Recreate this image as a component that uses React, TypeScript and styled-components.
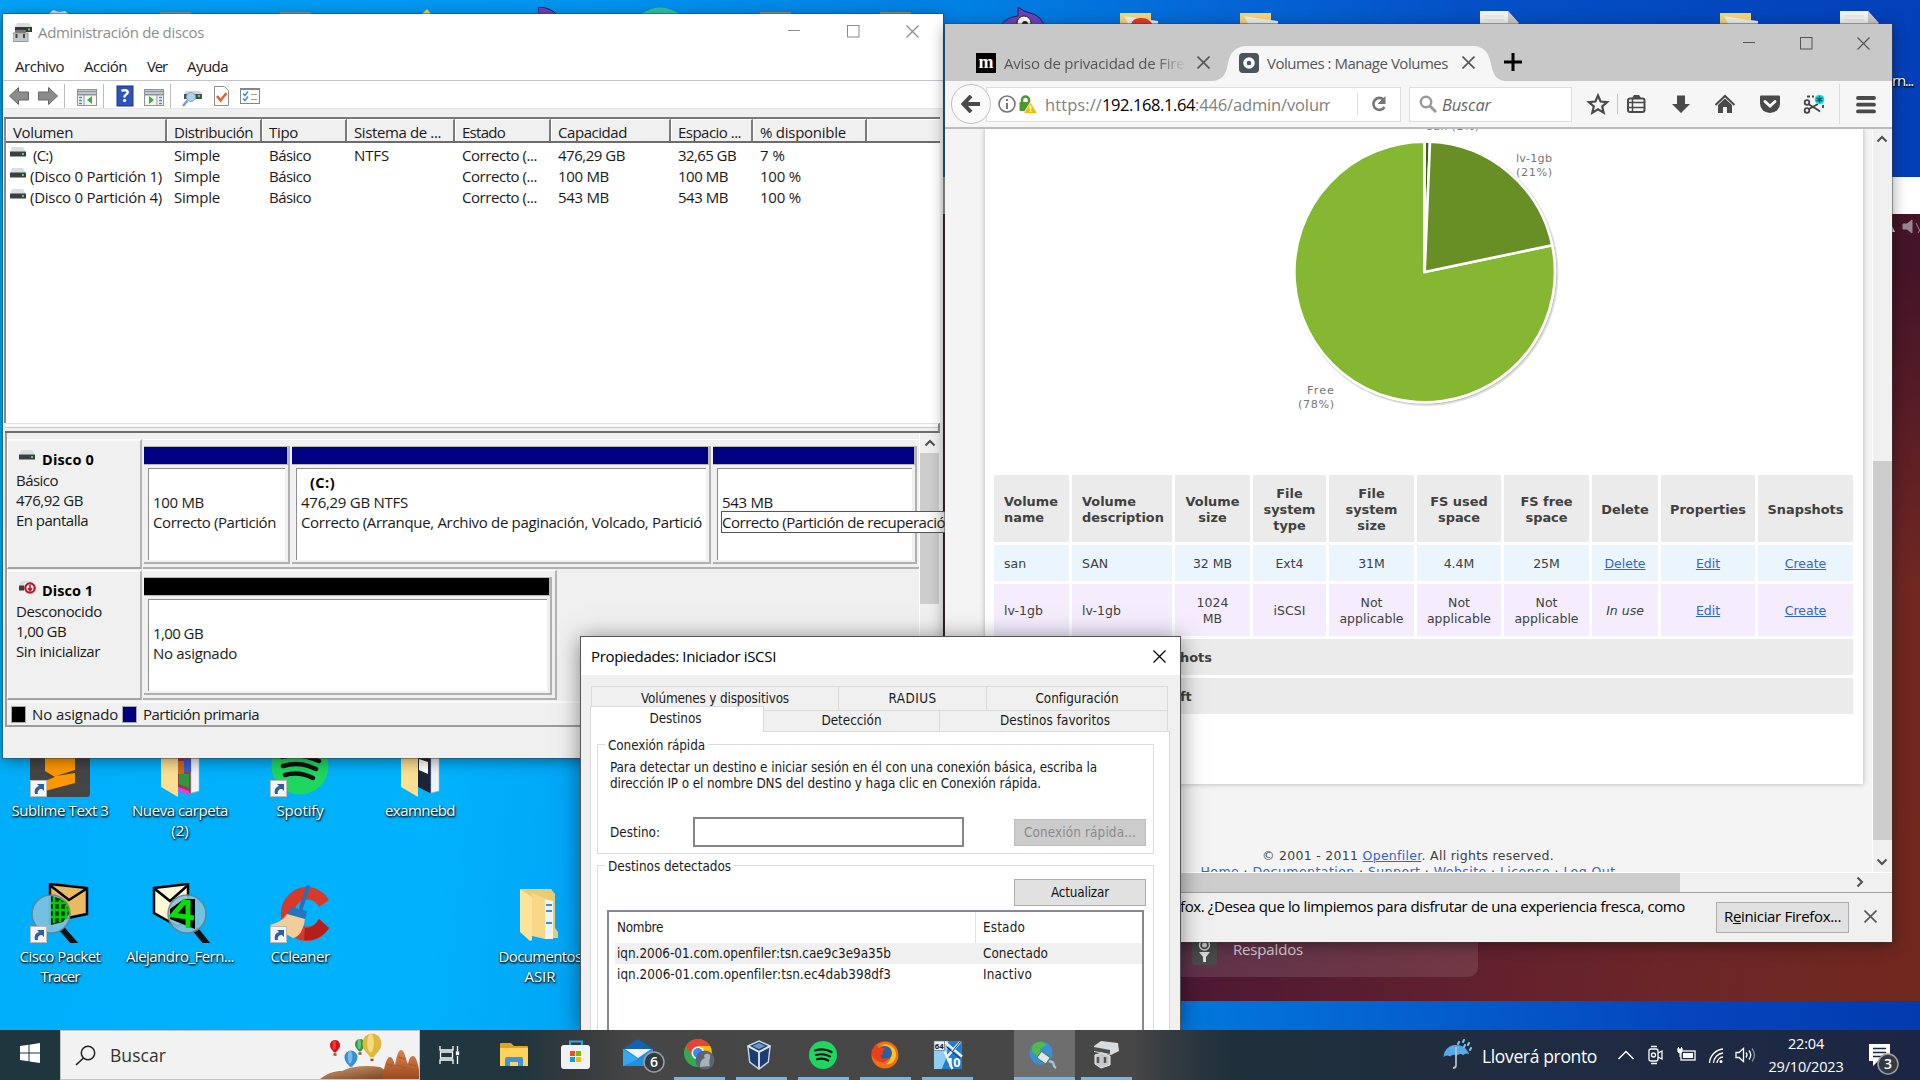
import React, { useLayoutEffect, useRef } from "react";
import styled, { createGlobalStyle, css } from "styled-components";

const ui = `"Open Sans", "Noto Sans", sans-serif`;
const verdana = `"DejaVu Sans", sans-serif`;
const tahoma = `"DejaVu Sans Condensed", "DejaVu Sans", sans-serif`;

const Global = createGlobalStyle`
  * { box-sizing: border-box; }
  body { margin: 0; overflow: hidden; font-family: ${ui}; font-size: 15px; color: #1a1a1a; }
`;

/* ---------- text fitted to a given width ---------- */
const FitSpan = styled.span`
  display: inline-block;
  white-space: pre;
`;
function Fit({ w, children }: { w: number; children: React.ReactNode }) {
  const ref = useRef<HTMLSpanElement>(null);
  useLayoutEffect(() => {
    const el = ref.current;
    if (!el) return;
    el.style.letterSpacing = "0px";
    const n = Array.from(el.textContent || "").length;
    el.style.letterSpacing = `${(w - el.getBoundingClientRect().width) / n}px`;
  }, [w]);
  return <FitSpan ref={ref}>{children}</FitSpan>;
}

/* ---------- desktop ---------- */
const Desktop = styled.main`
  position: relative;
  width: 1920px;
  height: 1080px;
  overflow: hidden;
  background: linear-gradient(97deg, #00aefa 0%, #00b2fd 26%, #0094ee 46%, #0080e2 60%, #0462d0 74%, #0545be 88%, #033aae 100%);
`;
const DesktopTop = styled.div`
  position: absolute;
  inset: 0 0 auto 0;
  height: 180px;
  background: linear-gradient(95deg, #00a2f6 0%, #0094ef 30%, #0080e3 50%, #0468d6 62%, #0450c6 76%, #033fb8 100%);
`;
const Peek = styled.svg<{ $x: number; $y: number }>`
  position: absolute;
  left: ${(p) => p.$x}px;
  top: ${(p) => p.$y}px;
`;
const DeskIcon = styled.div<{ $x: number; $y: number }>`
  position: absolute;
  left: ${(p) => p.$x}px;
  top: ${(p) => p.$y}px;
  width: 120px;
  display: flex;
  flex-direction: column;
  align-items: center;
  color: #fff;
  line-height: 20px;
  text-shadow: 0 1px 2px #000, 1px 1px 2px rgba(0, 0, 0, 0.8);
  svg { margin-bottom: 3px; }
`;
const EdgeLabel = styled.div`
  position: absolute;
  left: 1892px;
  top: 70px;
  line-height: 20px;
  color: #fff;
  text-shadow: 0 1px 2px #000, 1px 1px 2px #000;
`;

const Shortcut = () => (
  <g>
    <rect x="0.5" y="43.5" width="16" height="16" fill="#f4f4f4" stroke="#b9b9b9" />
    <path d="M5 57c-1-5 1-7 4-8l-2-2h7v7l-2-2c-3 0-5 2-4 5z" fill="#2f5f9f" />
  </g>
);
const Folder = ({ tone = "#7a2c2c" }: { tone?: string }) => (
  <g>
    <path d="M11 2h29v7h4v46h-4V12H11z" fill="#edc964" />
    <path d="M28 8h14l6 4v42l-8 2-12-6z" fill={tone} />
    <path d="M41 10l8 2v42l-8 2z" fill="#eef4fa" stroke="#a9bdd3" strokeWidth=".6" />
    <path d="M11 2l17 10v48L11 50z" fill="#fbdf92" />
  </g>
);

/* ---------- virtual machine behind ---------- */
const Vm = styled.section`
  position: absolute;
  left: 943px;
  top: 177px;
  width: 977px;
  height: 824px;
  padding-top: 37px;
  background: #fff;
  display: flex;
`;
const VmScreen = styled.div`
  position: relative;
  flex: 1;
  background: linear-gradient(165deg, #42122a 0%, #451428 30%, rgba(70, 20, 40, 0) 60%),
    linear-gradient(100deg, #4a1634 0%, #4b1834 32%, #5e1f2f 55%, #6d2628 78%, #70281d 100%);
  display: flex;
  flex-direction: column;
  justify-content: flex-end;
`;
const VmPane = styled.div`
  width: 535px;
  height: 120px;
  margin-bottom: 24px;
  border-radius: 0 0 10px 10px;
  background: rgba(255, 255, 255, 0.11);
  display: flex;
  align-items: flex-end;
  gap: 16px;
  padding: 0 0 12px 249px;
  color: #d8ced3;
  line-height: 31px;
`;
const VmTray = styled.svg`
  position: absolute;
  right: 0;
  top: 3px;
`;

/* ---------- windows ---------- */
const Window = styled.section<{ $x: number; $y: number; $w: number; $h: number }>`
  position: absolute;
  left: ${(p) => p.$x}px;
  top: ${(p) => p.$y}px;
  width: ${(p) => p.$w}px;
  height: ${(p) => p.$h}px;
  display: flex;
  flex-direction: column;
  background: #f0f0f0;
  box-shadow: 0 0 0 1px rgba(60, 60, 60, 0.45), 0 3px 14px rgba(0, 0, 0, 0.42);
`;
const Grow = styled.div`
  flex: 1;
`;

const DiskTitle = styled.header`
  height: 37px;
  background: #fff;
  display: flex;
  align-items: center;
  padding: 0 24px 2px 10px;
  color: #8c8c8c;
  > svg:first-child { margin: 2px 6px 0 0; }
`;
const CaptionButtons = styled.div<{ $gap: number }>`
  display: flex;
  gap: ${(p) => p.$gap}px;
`;
const MenuBar = styled.nav`
  height: 30px;
  background: #fff;
  border-bottom: 1px solid #c4c4cc;
  display: flex;
  align-items: center;
  gap: 20px;
  padding: 0 0 0 12px;
`;
const Tools = styled.div`
  height: 28px;
  background: #fff;
  display: flex;
  align-items: center;
  padding: 2px 0 0 5px;
  border-bottom: 1px solid #e6e6e6;
`;
const VolumeList = styled.div`
  height: 306px;
  margin: 8px 3px 0 1px;
  background: #fff;
  border-top: 2px solid #787878;
  border-left: 2px solid #8a8a8a;
`;
const volumeCols = css`
  display: grid;
  grid-template-columns: 161px 95px 85px 108px 96px 120px 82px 114px 1fr;
`;
const VolumeHeader = styled.div`
  ${volumeCols}
  height: 24px;
  background: #f0f0f0;
  border-bottom: 2px solid #6c6c6c;
`;
const HeaderCell = styled.div`
  border-right: 2px solid #7b7b7b;
  border-left: 1px solid #fff;
  border-top: 1px solid #fff;
  padding-left: 6px;
  line-height: 24px;
  white-space: nowrap;
  overflow: hidden;
  &:last-child { border-right: 0; }
`;
const VolumeRow = styled.div`
  ${volumeCols}
  height: 21px;
  position: relative;
  top: 2px;
  line-height: 21px;
  > div { padding-left: 7px; white-space: nowrap; }
  > div:first-child { padding-left: 3px; display: flex; gap: 3px; }
  svg { margin-top: 1px; }
`;
const SplitBar = styled.div`
  height: 10px;
  margin: 0 3px 0 2px;
  background: #f0f0f0;
  border-top: 1px solid #e2e2e2;
  border-right: 2px solid #8c8c8c;
  border-bottom: 2px solid #6e6e6e;
  box-shadow: inset 0 3px 0 #fafafa, inset 0 4px 0 #c9c9c9;
`;
const GraphArea = styled.div`
  height: 268px;
  margin: 0 3px 0 2px;
  border-left: 2px solid #9c9c9c;
  display: flex;
`;
const DiskRows = styled.div`
  width: 912px;
  padding-top: 6px;
`;
const DiskRow = styled.div`
  height: 131px;
  display: flex;
`;
const DiskLabel = styled.div`
  width: 135px;
  height: 130px;
  padding: 9px 0 0 8px;
  border-top: 2px solid #fbfbfb;
  border-left: 1px solid #fff;
  border-bottom: 2px solid #a3a3a3;
  border-right: 2px solid #b4b4b4;
  line-height: 20px;
`;
const DiskName = styled.div`
  display: flex;
  gap: 6px;
  font-weight: 700;
  font-size: 14.5px;
  color: #000;
  height: 20px;
  svg { margin: -1px 0 0 2px; }
`;
const Strip = styled.div<{ $w?: number }>`
  ${(p) => (p.$w ? `width: ${p.$w}px;` : "flex: 1;")}
  height: 130px;
  margin-left: 1px;
  padding: 6px 0 0 1px;
  border-top: 1px solid #fdfdfd;
  border-bottom: 2px solid #b0b0b0;
  ${(p) => p.$w && "border-right: 2px solid #b4b4b4;"}
  display: flex;
  gap: 2px;
`;
const Partition = styled.div<{ $w: number }>`
  width: ${(p) => p.$w}px;
  height: 118px;
  border-right: 2px solid #b0b0b0;
  border-bottom: 2px solid #b0b0b0;
`;
const PartitionBar = styled.div<{ $c: string }>`
  height: 19px;
  background: ${(p) => p.$c};
  border: 1px solid #b9b9b0;
  border-left: 0;
`;
const PartitionBox = styled.div`
  height: 92px;
  margin: 3px 3px 0 4px;
  padding: 3px 0 0 4px;
  background: #fff;
  border-top: 1px solid #8f8f8f;
  border-left: 1px solid #8f8f8f;
  line-height: 20px;
  white-space: nowrap;
  overflow: hidden;
  > div { height: 20px; }
  b { font-size: 14.5px; padding-left: 9px; color: #000; }
`;
const DiskScroll = styled.div`
  width: 20px;
  display: flex;
  flex-direction: column;
  align-items: center;
  border-left: 1px solid #fff;
  > svg { height: 20px; }
  > div { width: 19px; height: 151px; background: #cdcdcd; }
`;
const Legend = styled.div`
  height: 26px;
  margin: 0 3px 0 2px;
  border: solid #9c9c9c;
  border-width: 0 0 2px 2px;
  box-shadow: inset 0 2px 0 #fafafa;
  display: flex;
  align-items: center;
  padding: 2px 0 0 4px;
`;
const Swatch = styled.i<{ $c: string }>`
  width: 15px;
  height: 17px;
  background: ${(p) => p.$c};
  border: 1px solid #a9a9a9;
  margin-right: 6px;
`;
const Tip = styled.div`
  position: absolute;
  left: 721px;
  top: 511px;
  width: 224px;
  height: 22px;
  border: 1px solid #555;
  border-right: 0;
  background: linear-gradient(90deg, #fff 88%, #f0f0f0);
  line-height: 20px;
  white-space: nowrap;
  overflow: hidden;
`;

/* ---------- browser ---------- */
const TabStrip = styled.header`
  position: relative;
  height: 57px;
  background: #c8c8c8;
  display: flex;
  align-items: flex-end;
  color: #555;
`;
const Tab = styled.div<{ $w: number; $pad: number }>`
  position: relative;
  width: ${(p) => p.$w}px;
  height: 35px;
  padding: 0 0 2px ${(p) => p.$pad}px;
  display: flex;
  align-items: center;
  > svg { flex: none; }
`;
const TabShape = styled.svg`
  position: absolute;
  left: 0;
  top: 0;
`;
const TabText = styled.div<{ $w: number; $fade?: boolean }>`
  position: relative;
  width: ${(p) => p.$w}px;
  margin: 0 8px;
  white-space: nowrap;
  overflow: hidden;
  ${(p) => p.$fade && "mask-image: linear-gradient(90deg, #000 84%, transparent 100%);"}
`;
const Raised = styled.svg`
  position: relative;
`;
const BrowserCaption = styled(CaptionButtons)`
  align-self: flex-start;
  padding: 13px 22px 0 0;
`;
const NavBar = styled.div`
  height: 48px;
  background: #f6f6f6;
  border-bottom: 2px solid #bcbcbc;
  display: flex;
  align-items: center;
  padding-left: 6px;
`;
const BackButton = styled.div`
  width: 40px;
  height: 40px;
  border: 1px solid #c2c2c2;
  border-radius: 50%;
  background: #fafafa;
  display: grid;
  place-items: center;
  z-index: 1;
`;
const UrlBox = styled.div`
  width: 415px;
  height: 35px;
  margin-left: -5px;
  background: #fff;
  border: 1px solid #dedede;
  display: flex;
  align-items: center;
  padding-left: 10px;
  font-size: 16.5px;
  color: #808080;
  b { font-weight: 400; color: #000; }
`;
const UrlText = styled.div`
  width: 285px;
  margin-left: 8px;
  white-space: nowrap;
  overflow: hidden;
`;
const SearchBox = styled.div`
  width: 163px;
  height: 35px;
  margin: 0 14px 0 8px;
  background: #fff;
  border: 1px solid #dedede;
  display: flex;
  align-items: center;
  gap: 5px;
  padding-left: 9px;
  font-size: 16.5px;
  font-style: italic;
  color: #666;
`;
const VLine = styled.i<{ $h: number; $m: string; $c?: string }>`
  width: 1px;
  height: ${(p) => p.$h}px;
  margin: ${(p) => p.$m};
  background: ${(p) => p.$c || "#c6c6c6"};
`;
const Viewport = styled.div`
  height: 743px;
  display: flex;
  overflow: hidden;
`;
const Page = styled.div`
  flex: 1;
  background: #f4f4f4;
  overflow: hidden;
  padding-left: 40px;
  font-family: ${verdana};
  font-size: 12.5px;
  color: #404040;
`;
const Sheet = styled.div`
  width: 878px;
  height: 655px;
  background: #fff;
  box-shadow: 0 0 5px rgba(0, 0, 0, 0.28);
  padding: 0 6px;
`;
const VolTable = styled.table`
  table-layout: fixed;
  width: 865px;
  border-collapse: separate;
  border-spacing: 3px;
  line-height: 16px;
  th, td { padding: 2px 7px 0; background: #ebebeb; text-align: center; }
  th { height: 67px; font-size: 12.9px; }
  th:nth-child(-n + 2), td:nth-child(-n + 2) { text-align: left; padding-left: 10px; padding-right: 0; }
  a { color: #36c; text-decoration: underline; }
`;
const Tr = styled.tr<{ $c?: string; $h: number }>`
  td { background: ${(p) => p.$c || "#ebebeb"}; height: ${(p) => p.$h}px; }
  td[colspan] { padding-left: 186px; font-weight: 700; font-size: 12.9px; }
`;
const PageFooter = styled.footer`
  text-align: center;
  padding: 64px 0 0 0;
  width: 846px;
  line-height: 16px;
  a { color: #36c; text-decoration: underline; }
`;
const VScroll = styled.div`
  width: 20px;
  background: #f0f0f0;
  border-left: 1px solid #fff;
  display: flex;
  flex-direction: column;
  align-items: center;
  padding: 4px 1px 0 0;
`;
const VThumb = styled.div`
  width: 19px;
  height: 379px;
  margin: 316px 0 16px;
  background: #cdcdcd;
`;
const HScroll = styled.div`
  height: 20px;
  background: #f0f0f0;
  border-top: 1px solid #fff;
  display: flex;
  align-items: center;
  > div { width: 735px; height: 19px; background: #cdcdcd; margin-right: 174px; }
  > svg { margin-bottom: 2px; }
`;
const Notice = styled.div`
  flex: 1;
  border-top: 1px solid #a0a0a0;
  background: #f0f0f0;
  display: flex;
  padding-left: 235px;
  color: #000;
  > div:first-child { padding-top: 3px; width: 505px; white-space: nowrap; }
  > svg { margin: 17px 0 0 15px; }
`;
const NoticeButton = styled.div`
  width: 133px;
  height: 31px;
  margin: 9px 0 0 31px;
  background: #e1e1e1;
  border: 1px solid #adadad;
  line-height: 27px;
  text-align: center;
`;

/* ---------- iSCSI dialog ---------- */
const Dialog = styled(Window)`
  font-family: ${tahoma};
  font-size: 13.4px;
  box-shadow: 0 0 0 1px #555, 0 2px 22px rgba(0, 0, 0, 0.5);
`;
const DialogTitle = styled.header`
  height: 38px;
  flex: none;
  background: #fff;
  display: flex;
  align-items: center;
  justify-content: space-between;
  padding: 0 14px 0 10px;
  font-family: ${ui};
  font-size: 15px;
  color: #000;
`;
const TabsTop = styled.div`
  flex: none;
  display: grid;
  grid-template-columns: 247px 148px 182px;
  height: 23px;
  margin: 11px 0 0 10px;
  > div {
    border: 1px solid #dadada;
    border-right: 0;
    text-align: center;
    line-height: 23px;
  }
  > div:last-child { border-right: 1px solid #dadada; }
`;
const TabsBottom = styled.div`
  flex: none;
  display: grid;
  grid-template-columns: 174px 176px 228px;
  height: 22px;
  margin-left: 9px;
  > div {
    border-right: 1px solid #dadada;
    text-align: center;
    line-height: 23px;
  }
  > div:last-child { padding-left: 3px; }
  > div:first-child {
    height: 26px;
    margin-top: -3px;
    padding-right: 3px;
    background: #fff;
    border: 1px solid #dadada;
    border-bottom: 0;
    line-height: 24px;
    z-index: 1;
  }
`;
const DialogPage = styled.div`
  flex: 1;
  min-height: 0;
  overflow: hidden;
  width: 580px;
  margin-left: 9px;
  background: #fff;
  border: 1px solid #dadada;
  border-bottom: 0;
  padding: 12px 15px 0 6px;
`;
const Group = styled.div<{ $h: number }>`
  height: ${(p) => p.$h}px;
  margin-bottom: 11px;
  border: 1px solid #dcdcdc;
  padding: 0 7px 0 12px;
  display: flex;
  flex-direction: column;
`;
const GroupName = styled.div`
  align-self: flex-start;
  height: 16px;
  margin: -8px 0 0 -5px;
  padding: 0 3px;
  background: #fff;
  line-height: 17px;
`;
const Para = styled.div`
  margin-top: 7px;
  line-height: 16px;
  height: 32px;
`;
const FieldRow = styled.div`
  display: flex;
  align-items: center;
  margin-top: 25px;
`;
const ButtonRow = styled.div`
  display: flex;
  justify-content: flex-end;
  margin-top: 5px;
`;
const Input = styled.div`
  width: 271px;
  height: 30px;
  margin: 0 50px 0 33px;
  border: 2px solid #868686;
`;
const Button = styled.div<{ $off?: boolean }>`
  width: 132px;
  height: 27px;
  border: ${(p) => (p.$off ? "1px solid #bfbfbf" : "1px solid #adadad")};
  background: ${(p) => (p.$off ? "#ccc" : "#e1e1e1")};
  color: ${(p) => (p.$off ? "#8a8a8a" : "#111")};
  line-height: 26px;
  text-align: center;
`;
const Targets = styled.div`
  flex: 1;
  width: 537px;
  margin: 4px 0 0 -3px;
  border: 2px solid #868a90;
  border-bottom: 0;
`;
const TargetRow = styled.div<{ $h: number; $on?: boolean }>`
  display: grid;
  grid-template-columns: 361px 1fr;
  height: ${(p) => p.$h}px;
  line-height: ${(p) => p.$h}px;
  margin-left: 6px;
  background: ${(p) => (p.$on ? "#f0f0f0" : "#fff")};
  > div { padding-left: 2px; }
  > div:last-child { padding-left: 7px; }
`;
const TargetHead = styled(TargetRow)`
  > div:first-child { border-right: 1px solid #e0e0e0; }
`;

/* ---------- taskbar ---------- */
const Taskbar = styled.footer`
  position: absolute;
  left: 0;
  top: 1030px;
  width: 1920px;
  height: 50px;
  display: flex;
  align-items: center;
  color: #fff;
  background: linear-gradient(90deg, #20363e 0%, #21363e 27%, #353a3d 30%, #464646 33%, #474747 59%, #333b42 61%, #1f303b 64%, #1f2c40 80%, #1c2644 100%);
`;
const Start = styled.div`
  width: 60px;
  padding-left: 20px;
`;
const TaskSearch = styled.div`
  width: 360px;
  height: 50px;
  background: #f2f2f2;
  border: 1px solid #c4c4c4;
  display: flex;
  align-items: center;
  padding-left: 14px;
  color: #333;
  font-size: 17.5px;
  > span { margin-left: 14px; }
  > svg:last-child { margin-left: auto; }
`;
const TaskItem = styled.div<{ $w: number; $run?: boolean; $on?: boolean; $nudge?: number }>`
  width: ${(p) => p.$w}px;
  height: 50px;
  display: flex;
  align-items: center;
  justify-content: center;
  flex: none;
  background: ${(p) => (p.$on ? "#6e6e6e" : "transparent")};
  border-bottom: 3px solid ${(p) => (p.$run ? "#76b5ea" : "transparent")};
  padding: 3px ${(p) => p.$nudge || 0}px 0 0;
`;
const TaskGroup = styled.div<{ $gap: number; $l: number }>`
  display: flex;
  gap: ${(p) => p.$gap}px;
  margin-left: ${(p) => p.$l}px;
`;
const Clock = styled.div`
  width: 80px;
  display: flex;
  flex-direction: column;
  align-items: center;
  line-height: 23px;
  font-size: 14.5px;
`;
const Weather = styled.div`
  display: flex;
  align-items: center;
  gap: 8px;
  font-size: 17.5px;
  margin: 0 20px 0 auto;
  span { padding-top: 2px; }
`;
const Tray = styled.div`
  display: flex;
  align-items: center;
  gap: 11px;
  margin-right: 9px;
`;

/* ---------- small drawings ---------- */
const Cross = ({ s = 13, c = "#555", w = 1.2 }) => (
  <Raised width={s} height={s} viewBox={`0 0 ${s} ${s}`}>
    <path d={`M.5.5l${s - 1} ${s - 1}M${s - 0.5}.5l-${s - 1} ${s - 1}`} stroke={c} strokeWidth={w} fill="none" />
  </Raised>
);
const MinMax = ({ c }: { c: string }) => (
  <>
    <svg width="13" height="13"><path d="M0 5.500h12" stroke={c} /></svg>
    <svg width="13" height="13"><rect x=".5" y=".5" width="11.500" height="11.500" fill="none" stroke={c} /></svg>
  </>
);
const Chevron = ({ r = 0 }) => (
  <svg width="12" height="12" viewBox="0 0 12 12">
    <path d="M1.500 8.500L6 4l4.500 4.500" transform={`rotate(${r} 6 6)`} fill="none" stroke="#505050" strokeWidth="2" />
  </svg>
);
const Drive = ({ off = false }) => (
  <svg width="18" height="14" viewBox="0 0 18 14">
    <path d="M3 1h11l3 5H1z" fill="#dcdfe2" />
    <rect x="1" y="5.500" width="16" height="5" rx=".5" fill="#3b3f42" />
    <rect x="13" y="7" width="2" height="2" fill="#3fe05a" />
    {off && (
      <g>
        <path d="M6 3h12v11H6z" fill="#f0f0f0" />
        <circle cx="12" cy="8" r="5.800" fill="#c01028" />
        <circle cx="12" cy="8" r="3.600" fill="#fff" />
        <path d="M12 5v5.500M9.800 8.300L12 10.600l2.200-2.300" stroke="#c01028" strokeWidth="1.600" fill="none" />
      </g>
    )}
  </svg>
);
const ToolIcons = () => (
  <svg width="262" height="26" viewBox="0 0 262 26">
    <g stroke="#666" strokeWidth="1" fill="#8c8c8c">
      <path d="M1.500 13l9-8.500V9h10v8h-10v4.500z" />
      <path d="M49.500 13l-9-8.500V9h-10v8h10v4.500z" />
    </g>
    <path d="M56.500 1v24M95.500 1v24M162.500 1v24" stroke="#bdbdbd" />
    {[69, 136].map((x, i) => (
      <g key={x}>
        <rect x={x + 0.5} y="6.500" width="19" height="16" fill="#f6f6f6" stroke="#8d949b" />
        <path d={`M${x} 8.500h20M${x} 11.500h20`} stroke="#8d949b" strokeWidth="2" />
        <path d={i ? `M${x + 13} 12v10` : `M${x + 7} 12v10`} stroke="#8d949b" />
        <path d={i ? `M${x + 15} 14.500h3m-3 3h3m-3 3h3` : `M${x + 2} 14.500h3m-3 3h3m-3 3h3`} stroke="#4d88c4" strokeWidth="1.500" />
        <path d={i ? `M${x + 5} 13v8l5-4z` : `M${x + 15} 13v8l-5-4z`} fill="#3fae3a" />
      </g>
    ))}
    <rect x="109" y="3" width="16" height="20" fill="#2f52b8" stroke="#1d3584" />
    <text x="117" y="19" fontSize="17" fontWeight="700" fill="#fff" textAnchor="middle" fontFamily="Open Sans">?</text>
    <path d="M178 8h14l2 3h-18z" fill="#d4d7da" />
    <rect x="176" y="11" width="18" height="5" fill="#4b5053" />
    <rect x="190" y="12" width="2" height="2" fill="#3fe05a" />
    <circle cx="183" cy="14" r="4.500" fill="#a8d2ef" stroke="#8aa4b8" />
    <path d="M179.500 17.500L175 23" stroke="#7f9cb4" strokeWidth="2.500" />
    <path d="M206.500 3.500h10l4 4v15h-14z" fill="#fff" stroke="#909090" />
    <path d="M209 13l3.500 4.500 6-7.500" fill="none" stroke="#e8602c" strokeWidth="2.500" />
    <rect x="232.500" y="5.500" width="19" height="15" fill="#fff" stroke="#7f8890" />
    <path d="M232 6h20" stroke="#7f8890" strokeWidth="2" />
    <path d="M235 10.500l2 2 3-4M235 15.500l2 2 3-4" stroke="#3f8fdc" fill="none" strokeWidth="1.500" />
    <path d="M243 11.500h6M243 16.500h6" stroke="#a0a0a0" />
  </svg>
);

const volumes = [
  [<Fit w={22} key="v"> (C:)</Fit>, "NTFS", "476,29 GB", "32,65 GB", "7 %", 67, 58],
  [<Fit w={132} key="v">(Disco 0 Partición 1)</Fit>, "", "100 MB", "100 MB", "100 %", 51, 50],
  [<Fit w={132} key="v">(Disco 0 Partición 4)</Fit>, "", "543 MB", "543 MB", "100 %", 51, 50],
] as const;

function DiskManager() {
  return (
    <Window $x={3} $y={14} $w={940} $h={744}>
      <DiskTitle>
        <svg width="19" height="19" viewBox="0 0 19 19">
          <path d="M4 0h12l3 4H2z" fill="#d9dcdf" />
          <rect x="2" y="4" width="17" height="5" fill="#34383b" />
          <rect x="15" y="5.500" width="2" height="2" fill="#3fe05a" />
          <rect x="2" y="7" width="11" height="4" fill="#777" />
          <rect x="0" y="10" width="15" height="8.500" fill="#c3c7ca" stroke="#888" strokeWidth=".8" />
          <path d="M3.500 11v4M11 11v4" stroke="#444" strokeWidth="2" />
        </svg>
        <Fit w={166}>Administración de discos</Fit>
        <Grow />
        <CaptionButtons $gap={46}>
          <MinMax c="#8a8a8a" />
          <Cross c="#8a8a8a" />
        </CaptionButtons>
      </DiskTitle>
      <MenuBar>
        <Fit w={49}>Archivo</Fit>
        <Fit w={43}>Acción</Fit>
        <Fit w={20}>Ver</Fit>
        <Fit w={41}>Ayuda</Fit>
      </MenuBar>
      <Tools><ToolIcons /></Tools>
      <VolumeList>
        <VolumeHeader>
          <HeaderCell><Fit w={60}>Volumen</Fit></HeaderCell>
          <HeaderCell><Fit w={79}>Distribución</Fit></HeaderCell>
          <HeaderCell><Fit w={29}>Tipo</Fit></HeaderCell>
          <HeaderCell><Fit w={87}>Sistema de ...</Fit></HeaderCell>
          <HeaderCell><Fit w={43}>Estado</Fit></HeaderCell>
          <HeaderCell><Fit w={69}>Capacidad</Fit></HeaderCell>
          <HeaderCell><Fit w={63}>Espacio ...</Fit></HeaderCell>
          <HeaderCell><Fit w={86}>% disponible</Fit></HeaderCell>
          <HeaderCell />
        </VolumeHeader>
        {volumes.map((v, i) => (
          <VolumeRow key={i}>
            <div><Drive />{v[0]}</div>
            <div><Fit w={46}>Simple</Fit></div>
            <div><Fit w={42}>Básico</Fit></div>
            <div>{v[1] && <Fit w={35}>{v[1]}</Fit>}</div>
            <div><Fit w={75}>Correcto (...</Fit></div>
            <div><Fit w={v[5]}>{v[2]}</Fit></div>
            <div><Fit w={v[6]}>{v[3]}</Fit></div>
            <div><Fit w={i ? 41 : 25}>{v[4]}</Fit></div>
            <div />
          </VolumeRow>
        ))}
      </VolumeList>
      <SplitBar />
      <GraphArea>
        <DiskRows>
          <DiskRow>
            <DiskLabel>
              <DiskName><Drive /><Fit w={52}>Disco 0</Fit></DiskName>
              <div><Fit w={42}>Básico</Fit></div>
              <div><Fit w={67}>476,92 GB</Fit></div>
              <div><Fit w={72}>En pantalla</Fit></div>
            </DiskLabel>
            <Strip>
              <Partition $w={146}>
                <PartitionBar $c="#000080" />
                <PartitionBox>
                  <div />
                  <div><Fit w={51}>100 MB</Fit></div>
                  <div><Fit w={123}>Correcto (Partición</Fit></div>
                </PartitionBox>
              </Partition>
              <Partition $w={419}>
                <PartitionBar $c="#000080" />
                <PartitionBox>
                  <div><b><Fit w={25}>(C:)</Fit></b></div>
                  <div><Fit w={107}>476,29 GB NTFS</Fit></div>
                  <div><Fit w={401}>Correcto (Arranque, Archivo de paginación, Volcado, Partició</Fit></div>
                </PartitionBox>
              </Partition>
              <Partition $w={204}>
                <PartitionBar $c="#000080" />
                <PartitionBox>
                  <div />
                  <div><Fit w={51}>543 MB</Fit></div>
                </PartitionBox>
              </Partition>
            </Strip>
          </DiskRow>
          <DiskRow>
            <DiskLabel>
              <DiskName><Drive off /><Fit w={51}>Disco 1</Fit></DiskName>
              <div><Fit w={86}>Desconocido</Fit></div>
              <div><Fit w={50}>1,00 GB</Fit></div>
              <div><Fit w={84}>Sin inicializar</Fit></div>
            </DiskLabel>
            <Strip $w={414}>
              <Partition $w={408}>
                <PartitionBar $c="#000" />
                <PartitionBox>
                  <div />
                  <div><Fit w={50}>1,00 GB</Fit></div>
                  <div><Fit w={84}>No asignado</Fit></div>
                </PartitionBox>
              </Partition>
            </Strip>
          </DiskRow>
        </DiskRows>
        <DiskScroll><Chevron /><div /></DiskScroll>
      </GraphArea>
      <Legend>
        <Swatch $c="#000" /><Fit w={90}>No asignado </Fit>
        <Swatch $c="#000080" /><Fit w={116}>Partición primaria</Fit>
      </Legend>
    </Window>
  );
}

const NavIcons = () => (
  <svg width="290" height="40" viewBox="1586 84 290 40">
    <path d="M1598 95.500l2.600 6 6.500.6-4.900 4.300 1.500 6.400-5.700-3.400-5.700 3.400 1.500-6.400-4.900-4.300 6.500-.6z" fill="none" stroke="#4a4a4a" strokeWidth="2.200" />
    <path d="M1617.500 94v20" stroke="#c6c6c6" />
    <rect x="1628" y="98.500" width="16.500" height="13.500" rx="2" fill="none" stroke="#4a4a4a" strokeWidth="2" />
    <path d="M1632 98l2-3h5l2 3z" fill="#4a4a4a" />
    <path d="M1632.500 98v14M1628 102.500h16M1628 107.500h16" stroke="#4a4a4a" strokeWidth="1.500" />
    <path d="M1677 95.500h8v8.500h5l-9 9-9-9h5z" fill="#4a4a4a" />
    <path d="M1715.500 105l9.500-9 9.500 9" fill="none" stroke="#4a4a4a" strokeWidth="2" />
    <path d="M1718 105l7-6.500 7 6.500v8h-5v-6h-4v6h-5z" fill="#4a4a4a" />
    <path d="M1760 96.500q0-1 1-1h18q1 0 1 1v7a10 9.500 0 0 1-20 0z" fill="#4a4a4a" />
    <path d="M1765 101.500l5 4.500 5-4.500" fill="none" stroke="#fff" strokeWidth="2.800" strokeLinecap="round" />
    <g fill="none" stroke="#444" strokeWidth="1.800">
      <circle cx="1807" cy="102.500" r="2.300" /><circle cx="1807" cy="110.500" r="2.300" />
      <path d="M1809 104.500l9 5.500M1809 109l9-5" />
      <path d="M1807 96.500h7M1823 105v4M1820 111.500l-3-2" strokeDasharray="3 2" />
    </g>
    <circle cx="1819.500" cy="99.500" r="4.800" fill="#00e5f5" />
    <path d="M1819.500 96v7M1816.500 97.800l6 3.400M1822.500 97.800l-6 3.400" stroke="#055" strokeWidth="1.400" />
    <path d="M1839.500 84v40" stroke="#dcdcdc" />
    <path d="M1858 98h16M1858 104.700h16M1858 111.400h16" stroke="#4a4a4a" strokeWidth="3.800" strokeLinecap="round" />
  </svg>
);

const Pie = () => (
  <svg width="866" height="343" viewBox="991 129 866 343" display="block">
    <g fontFamily="DejaVu Sans" fontSize="11.200" fill="#777">
      <text x="1427" y="130" textLength="52">san (1%)</text>
      <text x="1516" y="162" textLength="36">lv-1gb</text>
      <text x="1516" y="176" textLength="36">(21%)</text>
      <text x="1307" y="394" textLength="27">Free</text>
      <text x="1298" y="408" textLength="36">(78%)</text>
    </g>
    <circle cx="1426" cy="273.500" r="132.500" fill="#bbb" opacity=".45" />
    <circle cx="1425.500" cy="273" r="131.500" fill="#aaa" opacity=".6" />
    <circle cx="1424.700" cy="272" r="131.500" fill="#fff" />
    <g stroke="#fff" strokeWidth="2.600">
      <path d="M1424.700 272L1552.200 245.200A130.300 130.300 0 1 1 1424.700 141.700z" fill="#86b732" />
      <path d="M1424.700 272V141.700A130.300 130.300 0 0 1 1430 141.800z" fill="#3f5f14" />
      <path d="M1424.700 272L1430 141.800A130.300 130.300 0 0 1 1552.200 245.200z" fill="#688f26" />
    </g>
  </svg>
);

function Browser() {
  return (
    <Window $x={945} $y={24} $w={947} $h={918}>
      <TabStrip>
        <Tab $w={265} $pad={31}>
          <svg width="20" height="20">
            <rect width="20" height="20" fill="#000" />
            <text x="10" y="15" fontSize="18" fontWeight="700" fontFamily="Liberation Serif" fill="#fff" textAnchor="middle">m</text>
          </svg>
          <TabText $w={188} $fade><Fit w={194}>Aviso de privacidad de Firefo</Fit></TabText>
          <svg width="3" height="1" />
          <Cross w={1.6} />
        </Tab>
        <Tab $w={297} $pad={29}>
          <TabShape width="297" height="35">
            <path d="M0 35C14 35 16 27 18 17.500S24 0 38 0H262C275 0 279 8 281 17.500S285 35 297 35z" fill="#f6f6f6" />
          </TabShape>
          <Raised width="20" height="20">
            <rect width="20" height="20" rx="4" fill="#4b545b" />
            <circle cx="10" cy="10" r="4" fill="none" stroke="#fff" strokeWidth="3.500" />
          </Raised>
          <TabText $w={184}><Fit w={181}>Volumes : Manage Volumes</Fit></TabText>
          <svg width="3" height="1" />
          <Cross w={1.6} />
        </Tab>
        <svg width="14" height="35" viewBox="3 0 14 35" overflow="visible">
          <path d="M0 16h18M9 7v18" stroke="#000" strokeWidth="3" />
        </svg>
        <Grow />
        <BrowserCaption $gap={44}><MinMax c="#555" /><Cross /></BrowserCaption>
      </TabStrip>
      <NavBar>
        <BackButton>
          <svg width="20" height="18"><path d="M10 1L2.500 9 10 17M3 9h16" fill="none" stroke="#4a4a4a" strokeWidth="4" /></svg>
        </BackButton>
        <UrlBox>
          <svg width="40" height="20" viewBox="0 0 40 20">
            <circle cx="10" cy="10" r="8" fill="none" stroke="#777" strokeWidth="1.600" />
            <path d="M10 9v6M10 5v2" stroke="#777" strokeWidth="2" />
            <path d="M25 9V6a3.500 3.500 0 0 1 7 0v3" fill="none" stroke="#4a9a2a" strokeWidth="2.500" />
            <rect x="22.500" y="8" width="11" height="9" rx="1" fill="#4a9a2a" />
            <path d="M33.500 8l7 11.500h-14z" fill="#ffb900" stroke="#fff" strokeWidth=".8" />
            <path d="M33.500 11.500v4M33.500 16.500v1.600" stroke="#fff" strokeWidth="1.600" />
          </svg>
          <UrlText><Fit w={57}>https://</Fit><b><Fit w={93}>192.168.1.64</Fit></b><Fit w={139}>:446/admin/volum</Fit></UrlText>
          <VLine $h={22} $m="0 12px 0 27px" $c="#dcdcdc" />
          <svg width="18" height="18" viewBox="0 0 18 18">
            <path d="M13.500 4.500A6 6 0 1 0 14.500 12" fill="none" stroke="#777" strokeWidth="2.600" />
            <path d="M15.500 1v8h-8z" fill="#777" />
          </svg>
        </UrlBox>
        <SearchBox>
          <svg width="18" height="18"><circle cx="7" cy="7" r="5.200" fill="none" stroke="#999" strokeWidth="2.400" /><path d="M11 11l6 6" stroke="#999" strokeWidth="3" /></svg>
          <Fit w={49}>Buscar</Fit>
        </SearchBox>
        <NavIcons />
      </NavBar>
      <Viewport>
        <Page>
          <Sheet>
            <Pie />
            <VolTable>
              <colgroup>
                {[75, 100, 75, 73, 85, 84, 85, 66, 94, 95].map((w, i) => <col key={i} width={w} />)}
              </colgroup>
              <tbody>
                <tr>
                  <th>Volume name</th><th>Volume<br />description</th><th>Volume<br />size</th>
                  <th>File<br />system<br />type</th><th>File<br />system<br />size</th>
                  <th>FS used<br />space</th><th>FS free<br />space</th><th>Delete</th><th>Properties</th><th>Snapshots</th>
                </tr>
                <Tr $c="#ebf5fd" $h={36}>
                  <td>san</td><td>SAN</td><td>32 MB</td><td>Ext4</td><td>31M</td><td>4.4M</td><td>25M</td>
                  <td><a>Delete</a></td><td><a>Edit</a></td><td><a>Create</a></td>
                </Tr>
                <Tr $c="#f5edfe" $h={52}>
                  <td>lv-1gb</td><td>lv-1gb</td><td>1024<br />MB</td><td>iSCSI</td><td>Not<br />applicable</td>
                  <td>Not<br />applicable</td><td>Not<br />applicable</td><td><i>In use</i></td><td><a>Edit</a></td><td><a>Create</a></td>
                </Tr>
                <Tr $h={36}><td colSpan={10}>hots</td></Tr>
                <Tr $h={36}><td colSpan={10}>ft</td></Tr>
              </tbody>
            </VolTable>
          </Sheet>
          <PageFooter>
            <div><Fit w={292}>© 2001 - 2011 <a>Openfiler</a>. All rights reserved.</Fit></div>
            <div><Fit w={415}><a>Home</a> · <a>Documentation</a> · <a>Support</a> · <a>Website</a> · <a>License</a> · <a>Log Out</a></Fit></div>
          </PageFooter>
        </Page>
        <VScroll><Chevron /><VThumb /><Chevron r={180} /></VScroll>
      </Viewport>
      <HScroll><div /><Chevron r={90} /></HScroll>
      <Notice>
        <div><Fit w={505}>fox. ¿Desea que lo limpiemos para disfrutar de una experiencia fresca, como</Fit></div>
        <NoticeButton><Fit w={117}>R<u>e</u>iniciar Firefox...</Fit></NoticeButton>
        <Cross w={1.6} />
      </Notice>
    </Window>
  );
}

function IscsiDialog() {
  return (
    <Dialog $x={581} $y={637} $w={599} $h={393}>
      <DialogTitle><Fit w={185}>Propiedades: Iniciador iSCSI</Fit><Cross c="#000" /></DialogTitle>
      <TabsTop>
        <div><Fit w={148}>Volúmenes y dispositivos</Fit></div>
        <div><Fit w={48}>RADIUS</Fit></div>
        <div><Fit w={83}>Configuración</Fit></div>
      </TabsTop>
      <TabsBottom>
        <div><Fit w={52}>Destinos</Fit></div>
        <div><Fit w={60}>Detección</Fit></div>
        <div><Fit w={110}>Destinos favoritos</Fit></div>
      </TabsBottom>
      <DialogPage>
        <Group $h={110}>
          <GroupName><Fit w={97}>Conexión rápida</Fit></GroupName>
          <Para>
            <Fit w={487}>Para detectar un destino e iniciar sesión en él con una conexión básica, escriba la</Fit>
            <Fit w={431}>dirección IP o el nombre DNS del destino y haga clic en Conexión rápida.</Fit>
          </Para>
          <FieldRow>
            <Fit w={50}>Destino:</Fit>
            <Input />
            <Button $off><Fit w={112}>Conexión rápida...</Fit></Button>
          </FieldRow>
        </Group>
        <Group $h={190}>
          <GroupName><Fit w={123}>Destinos detectados</Fit></GroupName>
          <ButtonRow><Button><Fit w={58}>Actualizar</Fit></Button></ButtonRow>
          <Targets>
            <TargetHead $h={31}><div><Fit w={46}>Nombre</Fit></div><div><Fit w={42}>Estado</Fit></div></TargetHead>
            <TargetRow $h={21} $on><div><Fit w={274}>iqn.2006-01.com.openfiler:tsn.cae9c3e9a35b</Fit></div><div><Fit w={65}>Conectado</Fit></div></TargetRow>
            <TargetRow $h={21}><div><Fit w={274}>iqn.2006-01.com.openfiler:tsn.ec4dab398df3</Fit></div><div><Fit w={49}>Inactivo</Fit></div></TargetRow>
          </Targets>
        </Group>
      </DialogPage>
    </Dialog>
  );
}

const Badge = ({ x, y, n }: { x: number; y: number; n: string }) => (
  <g>
    <circle cx={x} cy={y} r="10" fill="#333b40" stroke="#9aa0a4" strokeWidth="1.500" />
    <text x={x} y={y + 5} fontSize="14" fontWeight="600" fontFamily="Open Sans" fill="#fff" textAnchor="middle">{n}</text>
  </g>
);

const Balloon = ({ x, y, r, c, hi }: { x: number; y: number; r: number; c: string; hi: string }) => (
  <g>
    <path d={`M${x - r} ${y}a${r} ${r} 0 0 1 ${2 * r} 0c0 ${r * 0.8}-${r * 0.6} ${r * 1.1}-${r * 0.8} ${r * 1.5}h-${r * 0.4}c-${r * 0.2}-${r * 0.4}-${r * 0.8}-${r * 0.7}-${r * 0.8}-${r * 1.5}z`} fill={c} />
    <ellipse cx={x - r * 0.15} cy={y} rx={r * 0.35} ry={r} fill={hi} opacity=".6" />
    <rect x={x - 1.5} y={y + r * 1.65} width="3" height="2.500" fill="#8a5a2a" />
  </g>
);

const Spot = ({ s }: { s: number }) => (
  <svg width={s} height={s} viewBox="0 0 28 28">
    <circle cx="14" cy="14" r="14" fill="#1ed760" />
    <path d="M6 9.500c6-1.800 11.500-1.200 16.500 1.500M7 14c5-1.400 9.500-.9 13.800 1.400M8 18.300c4-1.100 7.800-.7 11.300 1.200" stroke="#111" strokeWidth="2.200" fill="none" strokeLinecap="round" />
  </svg>
);

function TaskBar() {
  return (
    <Taskbar>
      <Start>
        <svg width="20" height="20"><path d="M0 3l8.500-1.200v7.700H0zM9.500 1.700L20 0v9.500H9.500zM0 10.500h8.500v7.700L0 17zM9.500 10.500H20V20L9.500 18.400z" fill="#fff" /></svg>
      </Start>
      <TaskSearch>
        <svg width="21" height="21"><circle cx="13" cy="8" r="6.700" fill="none" stroke="#222" strokeWidth="1.500" /><path d="M8.500 13L1 20" stroke="#222" strokeWidth="1.700" /></svg>
        <Fit w={56}>Buscar</Fit>
        <svg width="99" height="48" viewBox="0 0 99 48">
          <defs>
            <linearGradient id="rock" x2="0" y2="1"><stop offset="0" stopColor="#d98350" /><stop offset="1" stopColor="#9a4a20" /></linearGradient>
            <linearGradient id="hill" x2="1" y2="1"><stop offset="0" stopColor="#d29a70" /><stop offset="1" stopColor="#6f3d1c" /></linearGradient>
          </defs>
          <Balloon x={15} y={14} r={5} c="#d40f18" hi="#ff5a4a" />
          <Balloon x={40} y={13} r={5} c="#2b9a4b" hi="#a5e08a" />
          <Balloon x={31} y={26} r={6.5} c="#3b8fd0" hi="#a5d8f5" />
          <Balloon x={52} y={12} r={9.5} c="#e0b83c" hi="#fff0b0" />
          <path d="M0 48c8-6 14-8 22-8 10-5 24-6 38-4l20 12z" fill="url(#hill)" />
          <path d="M62 48c2-9 4-22 8-22 3 0 4 6 5 8 1-6 3-15 6-15 4 0 5 11 7 14 1-4 2-8 5-8s5 8 6 14v9z" fill="url(#rock)" />
          <path d="M66 33l8 2M78 26l7 2M76 34l10 3M89 33l7 2" stroke="#a9552a" />
        </svg>
      </TaskSearch>
      <TaskGroup $gap={1} $l={19}>
        <TaskItem $w={22}>
          <svg width="22" height="20" fill="none" stroke="#fff" strokeWidth="1.300">
            <path d="M1 1v4h13V1M1 19v-4h13v4M1.500 7h12v6h-12zM18.500 1v5M18.500 11v8" /><rect x="17.500" y="7" width="2" height="2.500" fill="#fff" />
          </svg>
        </TaskItem>
      </TaskGroup>
      <TaskGroup $gap={0} $l={22}>
        <TaskItem $w={62}>
          <svg width="28" height="24"><path d="M0 1q0-1 1-1h10l3 3h13q1 0 1 1v18H0z" fill="#e2a41c" /><path d="M0 5h28v18H0z" fill="#ffd35c" /><path d="M5 23v-7q0-2 2-2h14q2 0 2 2v7h-5v-4h-8v4z" fill="#3c94df" /></svg>
        </TaskItem>
        <TaskItem $w={62}>
          <svg width="30" height="30"><path d="M9 6V1.500h12V6" fill="none" stroke="#2fa8ea" strokeWidth="2" /><rect y="5" width="29" height="24" rx="3" fill="#f2f2f2" /><path d="M9 11h5v5H9z" fill="#f04e1f" /><path d="M15 11h5v5h-5z" fill="#7dba00" /><path d="M9 17h5v5H9z" fill="#00a3ee" /><path d="M15 17h5v5h-5z" fill="#ffb800" /></svg>
        </TaskItem>
        <TaskItem $w={66}>
          <svg width="36" height="36" viewBox="0 0 36 36" overflow="visible">
            <path d="M1 12L16 2l15 10v3H1z" fill="#1062b5" /><path d="M1 12h30v17H1z" fill="#1f8fe0" /><path d="M3 12h26L16 21z" fill="#f4f4f4" /><path d="M1 12l15 10-15 7z" fill="#36a8f2" />
            <Badge x={32} y={25} n="6" />
          </svg>
        </TaskItem>
      </TaskGroup>
      <TaskGroup $gap={11} $l={1}>
        <TaskItem $w={51} $run>
          <svg width="34" height="34" viewBox="0 0 34 34">
            <circle cx="15" cy="15" r="14" fill="#34a853" /><path d="M15 15L2.900 8A14 14 0 0 1 27.100 8z" fill="#ea4335" /><path d="M2.900 8L9 18l6-3V8z" fill="#ea4335" /><path d="M15 8h12A14 14 0 0 1 15 29z" fill="#fbbc05" />
            <circle cx="15" cy="15" r="6.500" fill="#fff" /><circle cx="15" cy="15" r="5" fill="#4285f4" />
            <circle cx="22" cy="22" r="9.500" fill="#5b6472" /><path d="M17 29c0-6 2-8 5-9-3-3 2-6 5-3 1 4-2 5 0 11z" fill="#a9afb8" />
          </svg>
        </TaskItem>
        <TaskItem $w={51} $run $nudge={5}>
          <svg width="26" height="30" viewBox="0 0 28 30" preserveAspectRatio="none"><path d="M14 1l12 5-2 16-10 7L4 22 2 6z" fill="#1b3d70" stroke="#c4d6ea" strokeWidth="1.500" /><path d="M2 6l12 6 12-6M14 12v16" stroke="#d7e5f4" strokeWidth="2" fill="none" /><path d="M7 6l7-3 7 3-7 3z" fill="#6d94c4" /></svg>
        </TaskItem>
        <TaskItem $w={51} $run $nudge={1}><Spot s={28} /></TaskItem>
        <TaskItem $w={51} $run $nudge={1}>
          <svg width="28" height="28" viewBox="0 0 28 28"><circle cx="14" cy="14" r="13.500" fill="#f0701a" /><path d="M10 4c8-3 16 3 15 11-1 6-6 9-10 8 5-3 6-8 3-11 1-4-3-7-8-8z" fill="#ffc423" /><circle cx="14" cy="12" r="7" fill="#2c5ea8" /><path d="M1 9l4-6 3 4c3-1 5 0 6 1l-3 3c2 1 1 3-1 3-1 4 5 5 8 2-1 5-7 7-11 4-5-2-7-6-6-11z" fill="#e6401c" /></svg>
        </TaskItem>
        <TaskItem $w={51} $run>
          <svg width="30" height="30" viewBox="0 0 31 31"><rect x="1" y="1" width="29" height="29" fill="#8fcdf5" /><path d="M16 1h14v29H9l5-12z" fill="#1f7fce" /><path d="M12 2l18 15M14 18l14-16M12 12l8 18" stroke="#e8f4fc" strokeWidth="2.500" /><path d="M14 7l14 12M20 12l8-10" stroke="#123" /><rect x="1" y="1" width="11" height="10" fill="#eee" stroke="#555" strokeWidth=".6" /><text x="6.500" y="9" fontSize="8" fontWeight="700" textAnchor="middle" fontFamily="Open Sans" fill="#222">64</text><text x="21" y="28" fontSize="13" fontWeight="700" textAnchor="middle" fontFamily="Open Sans" fill="#fff">10</text></svg>
        </TaskItem>
      </TaskGroup>
      <TaskGroup $gap={6} $l={41}>
        <TaskItem $w={61} $run $on $nudge={4}>
          <svg width="30" height="30" viewBox="0 0 30 30"><circle cx="13" cy="13" r="11.500" fill="#3a8fd6" /><path d="M5 5c5-5 11-3 13-1-1 4-6 3-6 6s6 3 4 7-3 4-5 3-1-5-4-6-4-5-2-9z" fill="#54b84a" /><rect x="11" y="13" width="11" height="8" rx="1" fill="#dfe5e8" stroke="#3f7f3f" transform="rotate(35 15 16)" /><path d="M21 21l3 1c3 1 0 4 4 6" stroke="#9fc4dc" strokeWidth="2.500" fill="none" /></svg>
        </TaskItem>
        <TaskItem $w={51} $run $nudge={2}>
          <svg width="28" height="30" viewBox="0 0 28 30"><path d="M2 6l7-5 17 2 1 8-8 4L2 12z" fill="#d9dcde" /><path d="M2 7l16 3v4L2 11z" fill="#4a4f52" /><path d="M3 15l7-2 8 3v9l-9 3-6-4z" fill="#c5c9cc" stroke="#e9ebec" /><path d="M6 17v6M13 17v6" stroke="#555" strokeWidth="2.500" /></svg>
        </TaskItem>
      </TaskGroup>
      <Weather>
        <svg width="32" height="32" viewBox="0 0 32 32"><path d="M1 17C3 8 9 6 14 6s12 4 13 11q-3-3-6 0-3-3-7 0-3-3-6 0-4-3-7 0z" fill="#57a9e8" transform="rotate(-6 14 14)" /><path d="M14 8v18q0 3-3 3" stroke="#b2beca" strokeWidth="1.800" fill="none" /><path d="M17 3l-1 2M22 1l-1 2M27 4l-1 2M23 6l-1 2M29 9l-1 2" stroke="#7cc3f5" strokeWidth="2" strokeLinecap="round" /></svg>
        <Fit w={115}>Lloverá pronto</Fit>
      </Weather>
      <Tray>
        <svg width="18" height="12"><path d="M1.500 10L9 2.500l7.500 7.500" stroke="#fff" fill="none" strokeWidth="1.500" /></svg>
        <svg width="18" height="20" fill="none" stroke="#fff" strokeWidth="1.300"><rect x="3" y="4" width="9" height="12" rx="2" /><path d="M12 8l4-2v8l-4-2M5 1.500h6M5 18.500h6" /><circle cx="7.500" cy="10" r="2" /></svg>
        <svg width="22" height="18"><rect x="6" y="5" width="14" height="9" fill="none" stroke="#fff" strokeWidth="1.300" /><rect x="8" y="7" width="10" height="5" fill="#fff" /><path d="M2 3h6M3.500 1v2M6.500 1v2M3 3v3q2 2 4 0V3M5 7v4" stroke="#fff" fill="#fff" /></svg>
        <svg width="16" height="18" fill="none" stroke="#fff" strokeWidth="1.300"><path d="M1.500 17A15 15 0 0 1 15 3M5.500 17A10.500 10.500 0 0 1 15 7M9 17A6.500 6.500 0 0 1 15 11" /><circle cx="13" cy="15.500" r="1.500" fill="#fff" stroke="none" /></svg>
        <svg width="22" height="18" fill="none" stroke="#fff" strokeWidth="1.300"><path d="M1 6.500h3l4.500-4v13L4 11.500H1zM11 6.500q2 2.500 0 5M14 4.500q3.500 4.500 0 9" /><path d="M17 2.500q5 6.500 0 13" stroke="#8791a3" /></svg>
      </Tray>
      <Clock><Fit w={36}>22:04</Fit><Fit w={75}>29/10/2023</Fit></Clock>
      <svg width="74" height="40" viewBox="0 0 74 40">
        <path d="M23 9h21v17h-12l-5 5v-5h-4z" fill="#fff" /><path d="M27 13.500h13M27 17.500h13M27 21.500h9" stroke="#1c2644" strokeWidth="1.500" />
        <Badge x={42} y={29} n="3" />
      </svg>
    </Taskbar>
  );
}

const FolderPeek = ({ x, y = 13, red = false }: { x: number; y?: number; red?: boolean }) => (
  <Peek $x={x} $y={y} width="40" height="14">
    <path d="M0 0h31v14H0z" fill="#f6d679" />
    <path d="M4 3l18 3 16 2v6H10z" fill="#f1f1f1" />
    {red && <path d="M11 11q2-6 9-6 9-1 13 7H11z" fill="#e23b2c" />}
  </Peek>
);
const DocPeek = ({ x }: { x: number }) => (
  <Peek $x={x} $y={11} width="40" height="14"><path d="M0 0h28l11 13H0z" fill="#f4f4f4" /><path d="M28 0l11 12H28z" fill="#ccc" /><path d="M4 5h20M4 9h20" stroke="#ddd" /></Peek>
);
const PurplePeek = ({ x }: { x: number }) => (
  <Peek $x={x} $y={7} width="44" height="18"><path d="M0 18q6-8 17-9V0q6 5 12 6 10 2 14 12z" fill="#6a44bd" stroke="#27194f" /><circle cx="23" cy="16" r="7" fill="#fff" stroke="#222" /><circle cx="24" cy="17" r="3" fill="#222" /></Peek>
);

const Envelope = ({ flip = false }) => (
  <g>
    <path d={flip ? "M4 5L38 1v38l-11 4L4 30z" : "M20 1l37 4v26L33 36 20 40z"} fill={flip ? "#fdfbd6" : "#e8bb62"} stroke="#000" strokeWidth="2.500" />
    <path d={flip ? "M5 6l15 12L37 3" : "M21 3l18 14 17-11"} fill="none" stroke="#000" strokeWidth="2.500" />
    <path d={flip ? "M45 46l13 16" : "M32 46l14 16"} stroke="#111" strokeWidth="6" />
    <circle cx={flip ? 37 : 21} cy="31" r="19" fill="#7fc4e0" opacity=".9" stroke="#6a7f88" strokeWidth="1.500" />
    {flip ? (
      <path d="M20 26l14-10h11v30L20 36z" fill="#000" />
    ) : (
      <path d="M21 13q18 3 18 18l-6 8-12 3z" fill="#030" />
    )}
    {flip ? (
      <path d="M36 17L23 32l21 3M38 17v28" stroke="#0ae000" strokeWidth="5" fill="none" />
    ) : (
      <path d="M24 14v26M30 17v22M36 22v14M21 20h16M21 27h18M21 34h16" stroke="#0c0" strokeWidth="2.500" />
    )}
  </g>
);

export default function App() {
  return (
    <Desktop>
      <Global />
      <DesktopTop />
      <Peek $x={48} $y={9} width="24" height="6"><path d="M0 6l5-5 6 2 6-1 5 4z" fill="#ddd" /></Peek>
      <Peek $x={160} $y={12} width="31" height="3"><path d="M0 0h31v3H0z" fill="#7f9c9c" /></Peek>
      <Peek $x={280} $y={12} width="31" height="3"><path d="M0 0h31v3H0z" fill="#7f9c9c" /></Peek>
      <Peek $x={421} $y={9} width="12" height="6"><path d="M0 6l6-6 5 6z" fill="#f2dc3c" /></Peek>
      <Peek $x={538} $y={7} width="20" height="8"><path d="M0 8V0q12 0 19 8z" fill="#6a44bd" stroke="#27194f" /></Peek>
      <Peek $x={640} $y={7} width="42" height="8"><path d="M0 8q20-15 41 0z" fill="#35c2a0" /></Peek>
      <Peek $x={760} $y={12} width="31" height="3"><path d="M0 0h31v3H0z" fill="#8f9a80" /></Peek>
      <Peek $x={880} $y={12} width="31" height="3"><path d="M0 0h31v3H0z" fill="#8f9a80" /></Peek>
      <PurplePeek x={1001} />
      <FolderPeek x={1120} red />
      <FolderPeek x={1240} />
      <DocPeek x={1480} />
      <FolderPeek x={1720} />
      <DocPeek x={1840} />
      <EdgeLabel><Fit w={21}>rn...</Fit></EdgeLabel>

      <DeskIcon $x={0} $y={737}>
        <svg width="60" height="60"><rect width="60" height="60" rx="3" fill="#454545" /><path d="M15 8l30 10v15L26 39l19-3v10L15 54V44l10-4-10-6z" fill="#ff9800" /><Shortcut /></svg>
        <Fit w={97}>Sublime Text 3</Fit>
      </DeskIcon>
      <DeskIcon $x={120} $y={737}>
        <svg width="60" height="60"><Folder tone="#9c3a4a" /><path d="M28 50l11 4v4l-11-4z" fill="#e63fd8" /><path d="M34 22h7v13h-7z" fill="#3a5ad0" /><path d="M29 37h10v14l-10-4z" fill="#2a9a40" /><path d="M28 24h6v13h-6z" fill="#c86a20" /></svg>
        <Fit w={96}>Nueva carpeta</Fit><span>(2)</span>
      </DeskIcon>
      <DeskIcon $x={240} $y={737}>
        <svg width="60" height="60"><circle cx="30" cy="29" r="28.500" fill="#1ed760" /><path d="M12 20q18-5 37 4M13 29q17-5 33 3M15 38q14-4 28 3" fill="none" stroke="#111" strokeWidth="4.500" strokeLinecap="round" /><Shortcut /></svg>
        <Fit w={47}>Spotify</Fit>
      </DeskIcon>
      <DeskIcon $x={360} $y={737}>
        <svg width="60" height="60"><Folder tone="#1c2438" /><path d="M29 22l9 3v12l-9-4z" fill="#fff" /></svg>
        <Fit w={70}>examnebd</Fit>
      </DeskIcon>
      <DeskIcon $x={0} $y={883}>
        <svg width="60" height="60"><Envelope /><Shortcut /></svg>
        <Fit w={81}>Cisco Packet</Fit><Fit w={39}>Tracer</Fit>
      </DeskIcon>
      <DeskIcon $x={120} $y={883}>
        <svg width="60" height="60"><Envelope flip /></svg>
        <Fit w={108}>Alejandro_Fern...</Fit>
      </DeskIcon>
      <DeskIcon $x={240} $y={883}>
        <svg width="60" height="60"><path d="M59 17A26 27 0 1 0 59 45L49 36A13 13.500 0 1 1 49 24z" fill="#d8392b" /><path d="M59 45A26 27 0 0 1 34 57l1-12q8 1 14-9z" fill="#b3201c" /><path d="M38 4l-8 24" stroke="#2a6fb4" strokeWidth="4" strokeLinecap="round" /><path d="M21 24l16 4-2 9-18-5z" fill="#2574bd" /><path d="M17 31l18 5c-2 12-6 18-12 19L0 42q12-3 17-11z" fill="#f1cd9a" /><Shortcut /></svg>
        <Fit w={59}>CCleaner</Fit>
      </DeskIcon>
      <DeskIcon $x={480} $y={883}>
        <svg width="60" height="60"><path d="M10 6h31l4 5v34l3 4v6H30z" fill="#edcb72" /><path d="M35 16l8 2v38l-8 0z" fill="#eef4fb" /><path d="M36 22h6M36 28h6M36 40h6" stroke="#3d8fd0" strokeWidth="2" /><path d="M22 10l13 6v40l-13-3z" fill="#f6d888" /><path d="M10 6l12 8v43l-2 1-10-9z" fill="#fde29a" /></svg>
        <Fit w={83}>Documentos</Fit><Fit w={31}>ASIR</Fit>
      </DeskIcon>

      <Vm>
        <VmScreen>
          <VmTray width="34" height="20"><path d="M2 15l4-6 3 6z" fill="#ddd" /><path d="M17 7h4l5-4v13l-5-4h-4zM30 6l4 8M32 16l2-3" fill="#9a8590" stroke="#9a8590" /></VmTray>
          <VmPane>
            <svg width="25" height="34" viewBox="0 0 25 34"><rect width="25" height="34" rx="3" fill="#4b4b4b" /><circle cx="12.500" cy="14" r="5" fill="none" stroke="#ddd" strokeWidth="1.500" /><circle cx="12.500" cy="14" r="2.500" fill="#ddd" /><path d="M7 21h11l-4 5v5h-3v-5z" fill="#ddd" /></svg>
            <Fit w={70}>Respaldos</Fit>
          </VmPane>
        </VmScreen>
      </Vm>

      <DiskManager />
      <Tip><Fit w={223}>Correcto (Partición de recuperació</Fit></Tip>
      <Browser />
      <IscsiDialog />
      <TaskBar />
    </Desktop>
  );
}
